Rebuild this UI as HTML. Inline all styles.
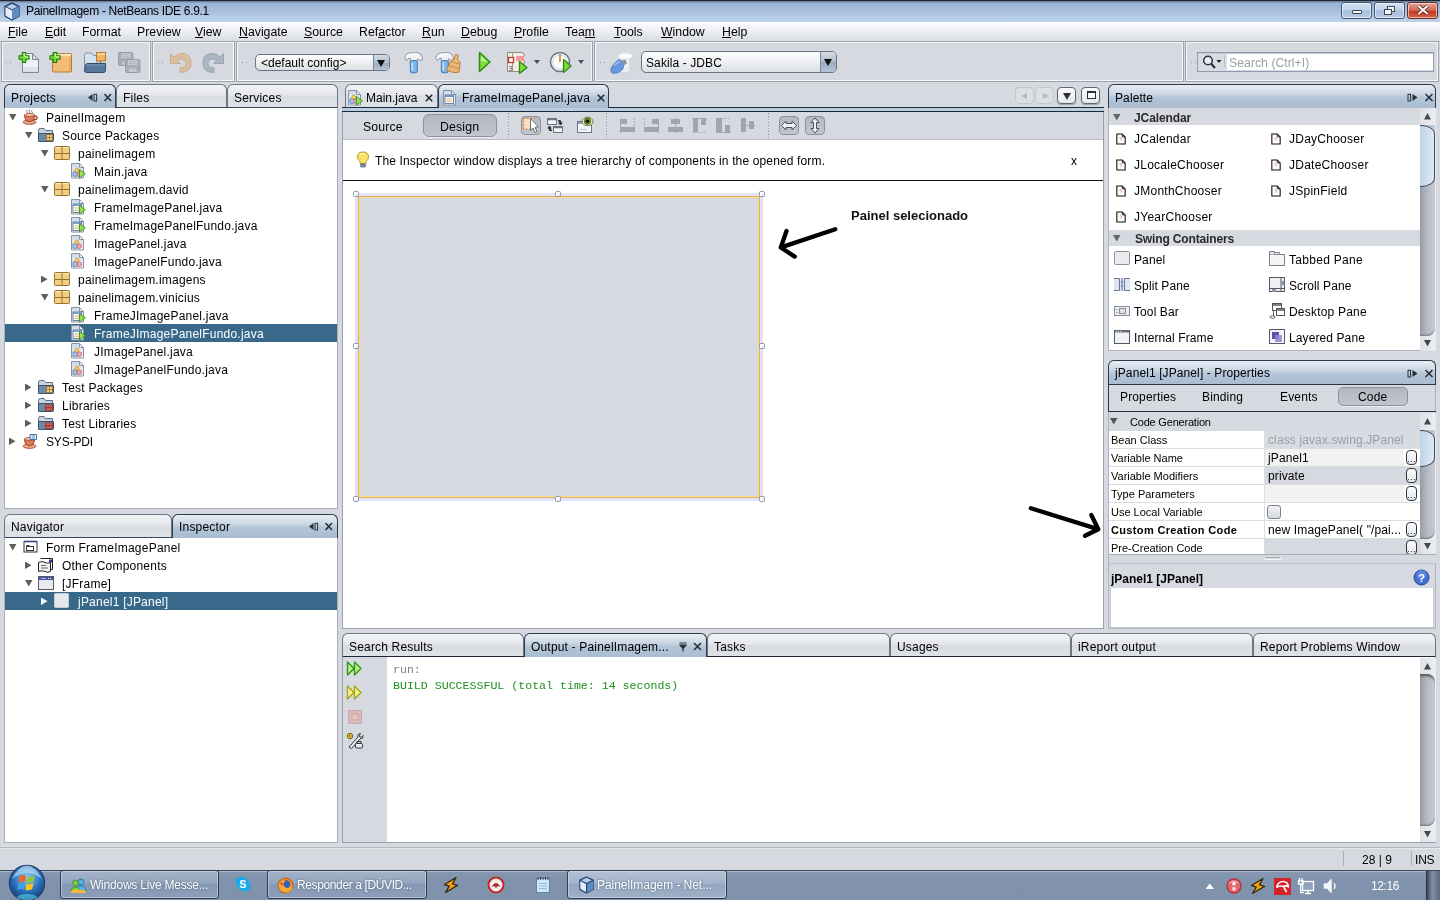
<!DOCTYPE html>
<html lang="en">
<head>
<meta charset="utf-8">
<title>PainelImagem - NetBeans IDE 6.9.1</title>
<style>
*{box-sizing:border-box;margin:0;padding:0}
html,body{width:1440px;height:904px;overflow:hidden;background:#fff}
body{position:relative;-webkit-font-smoothing:antialiased;font-family:"Liberation Sans",sans-serif;font-size:12px;color:#000;line-height:1}
.abs{position:absolute}
#app{position:absolute;left:0;top:0;width:1440px;height:870px;background:#d6d9df}
#app,#tb{will-change:transform}
/* title bar */
#title{position:absolute;left:0;top:0;width:1440px;height:22px;background:linear-gradient(#5d6f88 0,#97b3d5 2px,#a5bedd 9px,#b5cae5 16px,#c1d3ea 22px);border-top:1px solid #1f2733}
#title .t{position:absolute;left:26px;top:4px;font-size:12px;color:#000;letter-spacing:-.32px}
.wb{position:absolute;top:1px;height:17px;border:1px solid #3f5878;border-radius:3px;background:linear-gradient(#d3e1f1,#bfd2e8 48%,#a5bdda 52%,#b7cce5);box-shadow:inset 0 0 0 1px rgba(255,255,255,.55)}
/* menu */
#menu{position:absolute;left:0;top:22px;width:1440px;height:19px;background:linear-gradient(#fdfdfe,#eceef2 50%,#d9dce2)}
#menu span{position:absolute;top:4px;font-size:12.3px;white-space:nowrap}
#menu u{text-decoration:underline;text-underline-offset:1px}
/* toolbar */
.tbg{position:absolute;top:41px;height:41px;border:1px solid #9da1ab;background:#d6d9df;box-shadow:0 0 0 1px #f6f7f8 inset}
.grip{position:absolute;top:62px;width:1px;height:1px;background:#8a909c;box-shadow:4px 0 0 #8a909c}
/* nimbus tabs */
.tab{position:absolute;height:22px;border:1px solid #6e7683;border-bottom:none;border-radius:6px 6px 0 0;background:linear-gradient(#f3f4f6,#e4e6ea 45%,#d9dce1 50%,#dfe2e7);font-size:12px;letter-spacing:.2px;white-space:nowrap;overflow:hidden}
.tab.sel{z-index:2;border-color:#2a394d;background:linear-gradient(#e9eef4,#c9d6e3 40%,#b3c5d8 55%,#a9bcd0)}
.tab b{font-weight:normal;position:absolute;left:6px;top:7px}
.panel{position:absolute;background:#fff;border:1px solid #a9aeb7;border-top-color:#3a4656}
.tree div{position:absolute;left:0;height:18px;white-space:nowrap;font-size:12px;letter-spacing:.22px}
.tree .s{background:#39698a;color:#fff;width:100%}
.tree span{position:absolute;top:4px}
.arr-d{position:absolute;width:7.5px;height:6.5px;background:#5e5e5e;clip-path:polygon(0 0,100% 0,50% 100%)}
.arr-r{position:absolute;width:6.5px;height:7.5px;background:#5e5e5e;clip-path:polygon(0 0,100% 50%,0 100%)}
.combo{border:1px solid #6b7482;border-radius:5px;background:linear-gradient(#fcfcfd,#eef0f3 50%,#dcdfe5);white-space:nowrap;overflow:hidden}
.combo span{position:absolute}
.combo i{position:absolute;right:0;top:0;bottom:0;width:16px;border-left:1px solid #7d8696;background:linear-gradient(#d5dde8,#aebccf 50%,#97a9c1 51%,#b7c4d6)}
.combo i:after{content:"";position:absolute;left:3px;top:50%;margin-top:-3px;border-left:4px solid transparent;border-right:4px solid transparent;border-top:7px solid #111}
.dd{width:0;height:0;border-left:3.5px solid transparent;border-right:3.5px solid transparent;border-top:4px solid #4a4f58}
.nb{position:absolute;top:87px;width:19px;height:17px;border:1px solid #5f6672;border-radius:4px;background:linear-gradient(#fbfbfc,#e6e8ec);box-shadow:0 1px 1px #9ea3ad}
.nb.dis{border-color:#c3c7ce;box-shadow:none;background:#dcdfe4}
.ph{width:311px;height:17px;background:#d6d9df}
.ph b{position:absolute;top:4px;font-size:12px;white-space:nowrap;color:#2a2a2a}
.pt{font-size:12px;letter-spacing:.25px;white-space:nowrap}
.mono{font-family:"Liberation Mono",monospace;font-size:11.6px;white-space:pre}
</style>
</head>
<body>
<svg width="0" height="0" style="position:absolute"><defs><linearGradient id="gdoc" x1="0" y1="0" x2="0" y2="1"><stop offset="0" stop-color="#cbd8e8"/><stop offset=".55" stop-color="#e6ecf3"/><stop offset="1" stop-color="#f4f6f9"/></linearGradient></defs></svg>
<div id="app">

<!-- TITLE BAR -->
<div id="title">
  <svg class="abs" style="left:3px;top:1px" width="18" height="19" viewBox="0 0 18 19"><path d="M9 1 L16 4.5 V14 L9 18 L2 14 V4.5 Z" fill="#b9cfe8" stroke="#26436f" stroke-width="1.4"/><path d="M2 4.5 L9 8 L16 4.5 M9 8 V18" fill="none" stroke="#26436f" stroke-width="1.2"/><path d="M9 8 L16 4.5 V14 L9 18Z" fill="#5f8cc4"/><path d="M2.6 5.2 L9 8.4 V17.2 L2.6 13.6Z" fill="#e6eff9"/></svg>
  <div class="t">PainelImagem - NetBeans IDE 6.9.1</div>
  <div class="wb" style="left:1341px;width:31px"><i class="abs" style="left:10px;top:7px;width:10px;height:4px;border:1px solid #3c4657;background:#f4f6fa;border-radius:1px"></i></div>
  <div class="wb" style="left:1374px;width:31px"><i class="abs" style="left:12px;top:3px;width:8px;height:6px;border:1px solid #3c4657;background:#f4f6fa"></i><i class="abs" style="left:9px;top:6px;width:8px;height:6px;border:1px solid #3c4657;background:#f4f6fa"></i></div>
  <div class="wb" style="left:1407px;width:31px;background:linear-gradient(#e6a597,#d2644f 50%,#c0351c 51%,#d4644a);border-color:#6b2a22"><svg class="abs" style="left:9px;top:2px" width="12" height="10" viewBox="0 0 12 10"><path d="M1.5 1 L10.5 9 M10.5 1 L1.5 9" stroke="#5a1b14" stroke-width="3.6"/><path d="M1.5 1 L10.5 9 M10.5 1 L1.5 9" stroke="#fff" stroke-width="2"/></svg></div>
</div>

<!-- MENU BAR -->
<div id="menu">
  <span style="left:8px"><u>F</u>ile</span>
  <span style="left:45px"><u>E</u>dit</span>
  <span style="left:82px">Format</span>
  <span style="left:137px">Preview</span>
  <span style="left:195px"><u>V</u>iew</span>
  <span style="left:239px"><u>N</u>avigate</span>
  <span style="left:304px"><u>S</u>ource</span>
  <span style="left:359px">Ref<u>a</u>ctor</span>
  <span style="left:422px"><u>R</u>un</span>
  <span style="left:461px"><u>D</u>ebug</span>
  <span style="left:514px"><u>P</u>rofile</span>
  <span style="left:565px">Tea<u>m</u></span>
  <span style="left:614px"><u>T</u>ools</span>
  <span style="left:661px"><u>W</u>indow</span>
  <span style="left:722px"><u>H</u>elp</span>
</div>

<!-- TOOLBAR GROUPS -->
<div class="tbg" style="left:1px;width:150px"></div>
<div class="tbg" style="left:152px;width:83px"></div>
<div class="tbg" style="left:236px;width:357px"></div>
<div class="tbg" style="left:594px;width:590px"></div>
<div class="tbg" style="left:1185px;width:254px"></div>
<i class="grip" style="left:6px"></i><i class="grip" style="left:158px"></i><i class="grip" style="left:242px"></i><i class="grip" style="left:600px"></i><i class="grip" style="left:1191px"></i>
<!-- new file -->
<svg class="abs" style="left:17px;top:49px" width="26" height="26" viewBox="0 0 26 26"><path d="M5.500 4.500 H15.500 L21.500 10.500 V23.500 H5.500Z" fill="#eef2f7" stroke="#7f8896"/><path d="M6 18 H21 V23 H6Z" fill="#dbe2ec"/><path d="M15.500 4.500 V10.500 H21.500Z" fill="#d3dae4" stroke="#7f8896" stroke-linejoin="round"/><path d="M5.300 3.500 h3.400 v3.300 h3.300 v3.400 h-3.300 v3.300 h-3.400 v-3.300 h-3.300 v-3.400 h3.300z" fill="#6fdc2c" stroke="#217d0c" stroke-width="1.100" stroke-linejoin="round"/><path d="M6.300 5 h1.400 v2.800 h2.800 v1.400" fill="none" stroke="#d9fbc0" stroke-width="1"/></svg>
<!-- new project -->
<svg class="abs" style="left:48px;top:49px" width="26" height="26" viewBox="0 0 26 26"><rect x="4.500" y="4.500" width="19" height="18.500" rx="1" fill="#f3bd78" stroke="#b67d31"/><path d="M5 6 H23" stroke="#fbe3bd" stroke-width="2.200"/><path d="M21.800 8 V22" stroke="#e9a95c" stroke-width="1.500"/><path d="M5.300 3.500 h3.400 v3.300 h3.300 v3.400 h-3.300 v3.300 h-3.400 v-3.300 h-3.300 v-3.400 h3.300z" fill="#6fdc2c" stroke="#217d0c" stroke-width="1.100" stroke-linejoin="round"/><path d="M6.300 5 h1.400 v2.800 h2.800 v1.400" fill="none" stroke="#d9fbc0" stroke-width="1"/></svg>
<!-- open project -->
<svg class="abs" style="left:82px;top:49px" width="26" height="26" viewBox="0 0 26 26"><path d="M2.500 6 Q2.500 4 4.500 4 H9.500 L11.500 6.500 H15 V22 H2.500Z" fill="#d3e2ee" stroke="#8193aa"/><rect x="14.500" y="3.500" width="9" height="8.500" fill="#f1b264" stroke="#b57a2c"/><path d="M15 5 H23" stroke="#fbdcad" stroke-width="1.600"/><path d="M18.500 12 V15" stroke="#6a7482" stroke-width="1.400"/><path d="M3.500 16.500 Q3.500 14.500 5.500 14.500 H23.500 V21.500 Q23.500 23.500 21.500 23.500 H4.500 Q2.500 23.500 2.500 21.500Z" fill="#58799c" stroke="#304c6c"/><path d="M4 16 H23" stroke="#7d9bbb" stroke-width="1"/></svg>
<!-- save all (disabled) -->
<svg class="abs" style="left:116px;top:49px" width="26" height="26" viewBox="0 0 26 26"><g fill="#a9adb6" stroke="#979ca6"><rect x="2.500" y="3.500" width="14.500" height="13" rx="1.500"/><rect x="9.500" y="10.500" width="14.500" height="13" rx="1.500"/></g><g fill="#c3c7ce"><rect x="5" y="4" width="9.500" height="5"/><rect x="12" y="11" width="9.500" height="5"/><rect x="13" y="19.500" width="7.500" height="3.500"/><rect x="6" y="12.500" width="3" height="3.500"/></g><path d="M6 5.500 h7.500 M6 7.500 h7.500 M13 12.500 h7.500 M13 14.500 h7.500" stroke="#b4b8c0" stroke-width=".8"/></svg>
<!-- undo (disabled) -->
<svg class="abs" style="left:167px;top:49px" width="26" height="26" viewBox="0 0 26 26"><path d="M3.500 4.500 V14.500 H13.500 L10.500 11.500 Q13 9.500 15.500 10 Q19 11 19 14.500 Q19 18.500 13 19 V23.500 Q24 23.500 24 14 Q24 4.500 15 4.500 Q10.500 4.500 7 8 Z" fill="#d8bf9f" stroke="#c7ad8c" stroke-linejoin="round"/></svg>
<!-- redo (disabled) -->
<svg class="abs" style="left:201px;top:49px" width="26" height="26" viewBox="0 0 26 26"><path transform="translate(26,0) scale(-1,1)" d="M3.500 4.500 V14.500 H13.500 L10.500 11.500 Q13 9.500 15.500 10 Q19 11 19 14.500 Q19 18.500 13 19 V23.500 Q24 23.500 24 14 Q24 4.500 15 4.500 Q10.500 4.500 7 8 Z" fill="#aab6c2" stroke="#98a5b2" stroke-linejoin="round"/></svg>
<!-- config combo -->
<div class="abs combo" style="left:255px;top:54px;width:135px;height:17px"><span style="left:5px;top:2px;font-size:12px">&lt;default config&gt;</span><i></i></div>
<!-- build hammer -->
<svg class="abs" style="left:401px;top:49px" width="26" height="26" viewBox="0 0 26 26"><path d="M3.800 9 Q4.500 4.200 10 3.800 H17 Q20.500 4.300 21.200 8.500 L21.200 11.200 L18.800 11.600 Q18 9.800 16.300 9.800 V12.500 H9.300 V9.300 Q6.800 8.800 5.300 11.500Z" fill="#f1f3f6" stroke="#8a93a1" stroke-linejoin="round"/><path d="M6 7.500 Q7.500 5.300 10.500 5.200 H16.500" fill="none" stroke="#fff" stroke-width="1.200"/><rect x="9.300" y="11.500" width="7" height="12.300" rx="2" fill="#7fb6ea" stroke="#3f74ad"/><path d="M11.300 13.500 V21.500" stroke="#c4e0f8" stroke-width="1.600"/></svg>
<!-- clean & build -->
<svg class="abs" style="left:433px;top:49px" width="30" height="26" viewBox="0 0 30 26"><g transform="translate(-1,0)"><path d="M3.800 9 Q4.500 4.200 10 3.800 H17 Q20.500 4.300 21.200 8.500 L21.200 11.200 L18.800 11.600 Q18 9.800 16.300 9.800 V12.500 H9.300 V9.300 Q6.800 8.800 5.300 11.500Z" fill="#f1f3f6" stroke="#8a93a1" stroke-linejoin="round"/><path d="M6 7.500 Q7.500 5.300 10.500 5.200 H16.500" fill="none" stroke="#fff" stroke-width="1.200"/><rect x="9.300" y="11.500" width="7" height="12.300" rx="2" fill="#7fb6ea" stroke="#3f74ad"/><path d="M11.300 13.500 V21.500" stroke="#c4e0f8" stroke-width="1.600"/></g><path d="M22.500 5.500 L25.300 6.500 L24.300 11 L27.300 13.200 L26 23.200 Q20 25 13.500 21 L18.500 11 L21.300 10.300Z" fill="#edbb7a" stroke="#b98038" stroke-linejoin="round"/><path d="M18.500 12.500 L26.500 15 M16.500 17 L26 19.500" stroke="#c48a42" stroke-width="1"/><path d="M17 21.500 L20 15 M20.500 23 L23 16.500 M23.500 23.300 L25 18" stroke="#d9a35d" stroke-width=".8"/></svg>
<!-- run -->
<svg class="abs" style="left:474px;top:49px" width="22" height="26" viewBox="0 0 22 26"><path d="M5.500 3.500 L16 13 L5.500 22.500Z" fill="#7ddc3e" stroke="#2c8c12" stroke-width="1.500" stroke-linejoin="round"/><path d="M7 7 L13.500 13 L7 12Z" fill="#c6f3a4"/></svg>
<!-- debug -->
<svg class="abs" style="left:504px;top:49px" width="28" height="26" viewBox="0 0 28 26"><path d="M3.500 3.500 H19 L20.500 6 L19 9 L20.500 13 L19 17 V22.500 H3.500Z" fill="#f1ede0" stroke="#8d8c86"/><rect x="12" y="7" width="8" height="5" fill="#f29a9a"/><path d="M8.500 3 V23" stroke="#9a9a94"/><rect x="4.500" y="8.500" width="5" height="5" fill="#fff" stroke="#c0392b" stroke-width="1.300"/><text x="4.500" y="21.500" font-size="7.500" font-family="Liberation Sans,sans-serif" fill="#555">3</text><path d="M15.500 12.500 L23 18.500 L15.500 24.500Z" fill="#7ddc3e" stroke="#2c8c12" stroke-width="1.300" stroke-linejoin="round"/></svg>
<i class="abs dd" style="left:534px;top:60px"></i>
<!-- profile -->
<svg class="abs" style="left:548px;top:49px" width="28" height="26" viewBox="0 0 28 26"><circle cx="12" cy="13" r="9.500" fill="#f4f6f9" stroke="#6b7585" stroke-width="1.600"/><circle cx="12" cy="13" r="7" fill="#fff" stroke="#c9ced6" stroke-width=".8"/><path d="M12 5 V13" stroke="#e07b24" stroke-width="1.600"/><path d="M15.500 10.500 L23 17 L15.500 23.500Z" fill="#7ddc3e" stroke="#2c8c12" stroke-width="1.300" stroke-linejoin="round"/></svg>
<i class="abs dd" style="left:578px;top:60px"></i>
<!-- db connect -->
<svg class="abs" style="left:608px;top:48px" width="28" height="28" viewBox="0 0 28 28"><path d="M10 8 Q10 4.500 17.500 4.500 Q25 4.500 25 8 V21 Q25 24.500 17.500 24.500 Q10 24.500 10 21Z" fill="#eceef1" stroke="#d2d5db"/><path d="M21 6 V24 Q25 23.500 25 21 V8 Q24.500 6.500 21 6Z" fill="#d5d8de"/><ellipse cx="17.500" cy="8" rx="7.500" ry="3.200" fill="#fbfbfc" stroke="#d9dce1"/><path d="M11 11.500 L16.500 14 L15 21 Q11 25.500 5.500 25.500 Q2 24.500 3 20.500 Q5 15.500 11 11.500Z" fill="#6697db" stroke="#4f7fc4" stroke-width=".8"/><path d="M6 17.500 Q9 14.500 12 13.500" fill="none" stroke="#9cbdeb" stroke-width="1.500"/><path d="M13.500 13 L17.500 11.500 L19 15.500 L16 17Z" fill="#8b919c"/></svg>
<!-- db combo -->
<div class="abs combo" style="left:641px;top:51px;width:196px;height:22px"><span style="left:4px;top:5px;font-size:12px;letter-spacing:.1px">Sakila - JDBC</span><i></i></div>
<!-- search -->
<div class="abs" style="left:1197px;top:52px;width:237px;height:20px;border:1px solid #8f9bad;background:#d9dce2;box-shadow:inset 0 1px 0 #c3c7ce"><div class="abs" style="left:29px;top:1px;width:206px;height:16px;background:#fff"></div><svg class="abs" style="left:4px;top:1px" width="24" height="16" viewBox="0 0 24 16"><circle cx="6" cy="6.500" r="4.300" fill="#e4eef8" stroke="#2a2f38" stroke-width="1.500"/><path d="M9.200 9.800 L13 14" stroke="#2a2f38" stroke-width="2.200"/><path d="M14.500 6 h5 l-2.500 3z" fill="#1c1f25"/><path d="M22.500 2 V13" stroke="#b9bdc5"/></svg><span class="abs" style="left:31px;top:4px;font-size:12.300px;color:#9a9fa8;white-space:nowrap">Search (Ctrl+I)</span></div>


<!-- LEFT: Projects / Files / Services -->
<div class="tab sel" style="left:4px;top:84px;width:112px;height:24px"><b>Projects</b>
 <svg class="abs" style="left:82px;top:8px" width="26" height="10" viewBox="0 0 26 10"><path d="M5.500 1 V8 L1 4.500Z" fill="#2b3038"/><rect x="7" y="1.300" width="2.600" height="6.700" fill="none" stroke="#2b3038" stroke-width="1"/><path d="M17.500 1 L24 8 M24 1 L17.500 8" stroke="#2b3038" stroke-width="1.600"/></svg></div>
<div class="tab" style="left:116px;top:84px;width:111px;height:23px"><b>Files</b></div>
<div class="tab" style="left:227px;top:84px;width:111px;height:23px"><b>Services</b></div>
<div class="panel tree" style="left:4px;top:107px;width:334px;height:402px">
<div style="top:0px"><i class="arr-d" style="left:4px;top:6px"></i><svg class="abs" style="left:17px;top:1px" width="16" height="16" viewBox="0 0 16 16"><path d="M5 1 Q4 2.500 5.500 4 M7.500 .5 Q6.500 2 8 4 M10 1 Q9 2.500 10.500 4" fill="none" stroke="#6b6f78" stroke-width=".8"/><ellipse cx="7.500" cy="13.200" rx="6.500" ry="2.200" fill="#e6a083" stroke="#9c4a30" stroke-width=".8"/><path d="M2.500 6 H12.500 Q12.500 12.500 7.500 12.500 Q2.500 12.500 2.500 6Z" fill="#dd7a5a" stroke="#8e3c25" stroke-width=".9"/><path d="M12.300 7 Q15.500 7 15 9 Q14.500 11 11.500 10.500" fill="none" stroke="#9a3c20" stroke-width="1.300"/><ellipse cx="7.500" cy="6" rx="5" ry="1.500" fill="#f7c9a8" stroke="#9a3c20" stroke-width=".8"/></svg><span style="left:41px">PainelImagem</span></div>
<div style="top:18px"><i class="arr-d" style="left:20px;top:6px"></i><svg class="abs" style="left:33px;top:1px" width="16" height="16" viewBox="0 0 16 16"><path d="M.5 3.500 Q.5 1.500 2.500 1.500 H6 L7.500 3.500 H14.500 V14.500 H.500Z" fill="#c9d3e0" stroke="#5b6a80"/><path d="M.5 6.500 H15.500 V13.500 Q15.500 14.500 14.500 14.500 H1.500 Q.5 14.500 .5 13.500Z" fill="#6d88a8" stroke="#3d546f"/><rect x="8.500" y="7.500" width="6" height="6" fill="#f3d27e" stroke="#9c7226" stroke-width=".9"/><path d="M11.500 8 V13 M9 10.500 H14" stroke="#9c7226" stroke-width=".8"/></svg><span style="left:57px">Source Packages</span></div>
<div style="top:36px"><i class="arr-d" style="left:36px;top:6px"></i><svg class="abs" style="left:49px;top:1px" width="16" height="16" viewBox="0 0 16 16"><rect x=".5" y="1.500" width="15" height="13" rx="1" fill="#f0cf86" stroke="#9c7226"/><path d="M1.500 2.500 H14.500" stroke="#fbeabf"/><path d="M8 2 V14 M1 8.500 H15" stroke="#9c7226"/></svg><span style="left:73px">painelimagem</span></div>
<div style="top:54px"><svg class="abs" style="left:65px;top:1px" width="16" height="16" viewBox="0 0 16 16"><path d="M1.500 .5 H9.500 L13.500 4.500 V15 H1.500Z" fill="url(#gdoc)" stroke="#8a93a3"/><path d="M9.500 .5 V4.500 H13.500Z" fill="#f4f6f9" stroke="#8a93a3" stroke-linejoin="round"/><rect x="3" y="9" width="4.200" height="4.200" fill="#a9cbee" stroke="#4b78ad" stroke-width=".8"/><circle cx="9.300" cy="11.200" r="2.300" fill="#f4aab6" stroke="#c25a6e" stroke-width=".8"/><path d="M6.800 4.800 L9.200 7.200 L6.800 9.600 L4.400 7.200Z" fill="#f8cf62" stroke="#b9831d" stroke-width=".8"/><path d="M9.500 6.500 L15.300 10.800 L9.500 15Z" fill="#98df55" stroke="#3a8f1c" stroke-width=".9" stroke-linejoin="round"/></svg><span style="left:89px">Main.java</span></div>
<div style="top:72px"><i class="arr-d" style="left:36px;top:6px"></i><svg class="abs" style="left:49px;top:1px" width="16" height="16" viewBox="0 0 16 16"><rect x=".5" y="1.500" width="15" height="13" rx="1" fill="#f0cf86" stroke="#9c7226"/><path d="M1.500 2.500 H14.500" stroke="#fbeabf"/><path d="M8 2 V14 M1 8.500 H15" stroke="#9c7226"/></svg><span style="left:73px">painelimagem.david</span></div>
<div style="top:90px"><svg class="abs" style="left:65px;top:1px" width="16" height="16" viewBox="0 0 16 16"><path d="M1.500 .5 H9.500 L13.500 4.500 V15 H1.500Z" fill="url(#gdoc)" stroke="#8a93a3"/><path d="M9.500 .5 V4.500 H13.500Z" fill="#f4f6f9" stroke="#8a93a3" stroke-linejoin="round"/><rect x="3" y="5" width="8.500" height="8.500" fill="#fff" stroke="#5f7391" stroke-width=".9"/><path d="M3 6 H11.500" stroke="#6f98cf" stroke-width="1.800"/><path d="M4.500 9 H10 M4.500 11.300 H10" stroke="#d2b366" stroke-width="1.100"/><path d="M9.500 6.500 L15.300 10.800 L9.500 15Z" fill="#98df55" stroke="#3a8f1c" stroke-width=".9" stroke-linejoin="round"/></svg><span style="left:89px">FrameImagePanel.java</span></div>
<div style="top:108px"><svg class="abs" style="left:65px;top:1px" width="16" height="16" viewBox="0 0 16 16"><path d="M1.500 .5 H9.500 L13.500 4.500 V15 H1.500Z" fill="url(#gdoc)" stroke="#8a93a3"/><path d="M9.500 .5 V4.500 H13.500Z" fill="#f4f6f9" stroke="#8a93a3" stroke-linejoin="round"/><rect x="3" y="5" width="8.500" height="8.500" fill="#fff" stroke="#5f7391" stroke-width=".9"/><path d="M3 6 H11.500" stroke="#6f98cf" stroke-width="1.800"/><path d="M4.500 9 H10 M4.500 11.300 H10" stroke="#d2b366" stroke-width="1.100"/><path d="M9.500 6.500 L15.300 10.800 L9.500 15Z" fill="#98df55" stroke="#3a8f1c" stroke-width=".9" stroke-linejoin="round"/></svg><span style="left:89px">FrameImagePanelFundo.java</span></div>
<div style="top:126px"><svg class="abs" style="left:65px;top:1px" width="16" height="16" viewBox="0 0 16 16"><path d="M1.500 .5 H9.500 L13.500 4.500 V15 H1.500Z" fill="url(#gdoc)" stroke="#8a93a3"/><path d="M9.500 .5 V4.500 H13.500Z" fill="#f4f6f9" stroke="#8a93a3" stroke-linejoin="round"/><rect x="3" y="9" width="4.200" height="4.200" fill="#a9cbee" stroke="#4b78ad" stroke-width=".8"/><circle cx="9.300" cy="11.200" r="2.300" fill="#f4aab6" stroke="#c25a6e" stroke-width=".8"/><path d="M6.800 4.800 L9.200 7.200 L6.800 9.600 L4.400 7.200Z" fill="#f8cf62" stroke="#b9831d" stroke-width=".8"/></svg><span style="left:89px">ImagePanel.java</span></div>
<div style="top:144px"><svg class="abs" style="left:65px;top:1px" width="16" height="16" viewBox="0 0 16 16"><path d="M1.500 .5 H9.500 L13.500 4.500 V15 H1.500Z" fill="url(#gdoc)" stroke="#8a93a3"/><path d="M9.500 .5 V4.500 H13.500Z" fill="#f4f6f9" stroke="#8a93a3" stroke-linejoin="round"/><rect x="3" y="9" width="4.200" height="4.200" fill="#a9cbee" stroke="#4b78ad" stroke-width=".8"/><circle cx="9.300" cy="11.200" r="2.300" fill="#f4aab6" stroke="#c25a6e" stroke-width=".8"/><path d="M6.800 4.800 L9.200 7.200 L6.800 9.600 L4.400 7.200Z" fill="#f8cf62" stroke="#b9831d" stroke-width=".8"/></svg><span style="left:89px">ImagePanelFundo.java</span></div>
<div style="top:162px"><i class="arr-r" style="left:36px;top:5.5px"></i><svg class="abs" style="left:49px;top:1px" width="16" height="16" viewBox="0 0 16 16"><rect x=".5" y="1.500" width="15" height="13" rx="1" fill="#f0cf86" stroke="#9c7226"/><path d="M1.500 2.500 H14.500" stroke="#fbeabf"/><path d="M8 2 V14 M1 8.500 H15" stroke="#9c7226"/></svg><span style="left:73px">painelimagem.imagens</span></div>
<div style="top:180px"><i class="arr-d" style="left:36px;top:6px"></i><svg class="abs" style="left:49px;top:1px" width="16" height="16" viewBox="0 0 16 16"><rect x=".5" y="1.500" width="15" height="13" rx="1" fill="#f0cf86" stroke="#9c7226"/><path d="M1.500 2.500 H14.500" stroke="#fbeabf"/><path d="M8 2 V14 M1 8.500 H15" stroke="#9c7226"/></svg><span style="left:73px">painelimagem.vinicius</span></div>
<div style="top:198px"><svg class="abs" style="left:65px;top:1px" width="16" height="16" viewBox="0 0 16 16"><path d="M1.500 .5 H9.500 L13.500 4.500 V15 H1.500Z" fill="url(#gdoc)" stroke="#8a93a3"/><path d="M9.500 .5 V4.500 H13.500Z" fill="#f4f6f9" stroke="#8a93a3" stroke-linejoin="round"/><rect x="3" y="5" width="8.500" height="8.500" fill="#fff" stroke="#5f7391" stroke-width=".9"/><path d="M3 6 H11.500" stroke="#6f98cf" stroke-width="1.800"/><path d="M4.500 9 H10 M4.500 11.300 H10" stroke="#d2b366" stroke-width="1.100"/><path d="M9.500 6.500 L15.300 10.800 L9.500 15Z" fill="#98df55" stroke="#3a8f1c" stroke-width=".9" stroke-linejoin="round"/></svg><span style="left:89px">FrameJImagePanel.java</span></div>
<div class=s style="top:216px"><svg class="abs" style="left:65px;top:1px" width="16" height="16" viewBox="0 0 16 16"><path d="M1.500 .5 H9.500 L13.500 4.500 V15 H1.500Z" fill="url(#gdoc)" stroke="#8a93a3"/><path d="M9.500 .5 V4.500 H13.500Z" fill="#f4f6f9" stroke="#8a93a3" stroke-linejoin="round"/><rect x="3" y="5" width="8.500" height="8.500" fill="#fff" stroke="#5f7391" stroke-width=".9"/><path d="M3 6 H11.500" stroke="#6f98cf" stroke-width="1.800"/><path d="M4.500 9 H10 M4.500 11.300 H10" stroke="#d2b366" stroke-width="1.100"/><path d="M9.500 6.500 L15.300 10.800 L9.500 15Z" fill="#98df55" stroke="#3a8f1c" stroke-width=".9" stroke-linejoin="round"/></svg><span style="left:89px">FrameJImagePanelFundo.java</span></div>
<div style="top:234px"><svg class="abs" style="left:65px;top:1px" width="16" height="16" viewBox="0 0 16 16"><path d="M1.500 .5 H9.500 L13.500 4.500 V15 H1.500Z" fill="url(#gdoc)" stroke="#8a93a3"/><path d="M9.500 .5 V4.500 H13.500Z" fill="#f4f6f9" stroke="#8a93a3" stroke-linejoin="round"/><rect x="3" y="9" width="4.200" height="4.200" fill="#a9cbee" stroke="#4b78ad" stroke-width=".8"/><circle cx="9.300" cy="11.200" r="2.300" fill="#f4aab6" stroke="#c25a6e" stroke-width=".8"/><path d="M6.800 4.800 L9.200 7.200 L6.800 9.600 L4.400 7.200Z" fill="#f8cf62" stroke="#b9831d" stroke-width=".8"/></svg><span style="left:89px">JImagePanel.java</span></div>
<div style="top:252px"><svg class="abs" style="left:65px;top:1px" width="16" height="16" viewBox="0 0 16 16"><path d="M1.500 .5 H9.500 L13.500 4.500 V15 H1.500Z" fill="url(#gdoc)" stroke="#8a93a3"/><path d="M9.500 .5 V4.500 H13.500Z" fill="#f4f6f9" stroke="#8a93a3" stroke-linejoin="round"/><rect x="3" y="9" width="4.200" height="4.200" fill="#a9cbee" stroke="#4b78ad" stroke-width=".8"/><circle cx="9.300" cy="11.200" r="2.300" fill="#f4aab6" stroke="#c25a6e" stroke-width=".8"/><path d="M6.800 4.800 L9.200 7.200 L6.800 9.600 L4.400 7.200Z" fill="#f8cf62" stroke="#b9831d" stroke-width=".8"/></svg><span style="left:89px">JImagePanelFundo.java</span></div>
<div style="top:270px"><i class="arr-r" style="left:20px;top:5.5px"></i><svg class="abs" style="left:33px;top:1px" width="16" height="16" viewBox="0 0 16 16"><path d="M.5 3.500 Q.5 1.500 2.500 1.500 H6 L7.500 3.500 H14.500 V14.500 H.500Z" fill="#c9d3e0" stroke="#5b6a80"/><path d="M.5 6.500 H15.500 V13.500 Q15.500 14.500 14.500 14.500 H1.500 Q.5 14.500 .5 13.500Z" fill="#6d88a8" stroke="#3d546f"/><rect x="8.500" y="7.500" width="6" height="6" fill="#f3d27e" stroke="#9c7226" stroke-width=".9"/><path d="M11.500 8 V13 M9 10.500 H14" stroke="#9c7226" stroke-width=".8"/></svg><span style="left:57px">Test Packages</span></div>
<div style="top:288px"><i class="arr-r" style="left:20px;top:5.5px"></i><svg class="abs" style="left:33px;top:1px" width="16" height="16" viewBox="0 0 16 16"><path d="M.5 3.500 Q.5 1.500 2.500 1.500 H6 L7.500 3.500 H14.500 V14.500 H.500Z" fill="#c9d3e0" stroke="#5b6a80"/><path d="M.5 6.500 H15.500 V13.500 Q15.500 14.500 14.500 14.500 H1.500 Q.5 14.500 .5 13.500Z" fill="#6d88a8" stroke="#3d546f"/><rect x="7.500" y="8" width="7" height="2.300" fill="#e8604f" stroke="#8d2a20" stroke-width=".7"/><rect x="7.500" y="11" width="7" height="2.300" fill="#e8604f" stroke="#8d2a20" stroke-width=".7"/></svg><span style="left:57px">Libraries</span></div>
<div style="top:306px"><i class="arr-r" style="left:20px;top:5.5px"></i><svg class="abs" style="left:33px;top:1px" width="16" height="16" viewBox="0 0 16 16"><path d="M.5 3.500 Q.5 1.500 2.500 1.500 H6 L7.500 3.500 H14.500 V14.500 H.500Z" fill="#c9d3e0" stroke="#5b6a80"/><path d="M.5 6.500 H15.500 V13.500 Q15.500 14.500 14.500 14.500 H1.500 Q.5 14.500 .5 13.500Z" fill="#6d88a8" stroke="#3d546f"/><rect x="7.500" y="8" width="7" height="2.300" fill="#e8604f" stroke="#8d2a20" stroke-width=".7"/><rect x="7.500" y="11" width="7" height="2.300" fill="#e8604f" stroke="#8d2a20" stroke-width=".7"/></svg><span style="left:57px">Test Libraries</span></div>
<div style="top:324px"><i class="arr-r" style="left:4px;top:5.5px"></i><svg class="abs" style="left:17px;top:1px" width="16" height="16" viewBox="0 0 16 16"><ellipse cx="7.500" cy="13.200" rx="6.500" ry="2.200" fill="#e6a083" stroke="#9c4a30" stroke-width=".8"/><path d="M2.500 6 H12.500 Q12.500 12.500 7.500 12.500 Q2.500 12.500 2.500 6Z" fill="#dd7a5a" stroke="#8e3c25" stroke-width=".9"/><ellipse cx="7.500" cy="6" rx="5" ry="1.500" fill="#f7c9a8" stroke="#9a3c20" stroke-width=".8"/><path d="M8 1.500 h6.500 v5 h-6.500z" fill="#fff" stroke="#3f6fae" stroke-width="1"/><path d="M9.500 3 h3.500 M9.500 5 h3.500" stroke="#3f6fae" stroke-width=".9"/></svg><span style="left:41px;letter-spacing:-.15px">SYS-PDI</span></div>
</div>
<!-- LEFT: Navigator / Inspector -->
<div class="tab" style="left:4px;top:514px;width:168px;height:23px"><b style="top:6px">Navigator</b></div>
<div class="tab sel" style="left:172px;top:514px;width:166px;height:24px"><b style="top:6px">Inspector</b>
 <svg class="abs" style="left:135px;top:7px" width="26" height="10" viewBox="0 0 26 10"><path d="M5.500 1 V8 L1 4.500Z" fill="#2b3038"/><rect x="7" y="1.300" width="2.600" height="6.700" fill="none" stroke="#2b3038" stroke-width="1"/><path d="M17.500 1 L24 8 M24 1 L17.500 8" stroke="#2b3038" stroke-width="1.600"/></svg></div>
<div class="panel tree" style="left:4px;top:537px;width:334px;height:306px">
<div style="top:0px"><i class="arr-d" style="left:4px;top:6px"></i><svg class="abs" style="left:17px;top:1px" width="16" height="16" viewBox="0 0 16 16"><rect x="2" y="2.500" width="13" height="10.500" fill="#fff" stroke="#333" stroke-width="1"/><path d="M2 2.500 H15" stroke="#3b3f8f" stroke-width="1.600"/><rect x="4.500" y="7.500" width="7" height="4" fill="none" stroke="#333" stroke-width="1"/><path d="M4.500 7.500 h3 v-1.500 h-3z" fill="#333"/></svg><span style="left:41px">Form FrameImagePanel</span></div>
<div style="top:18px"><i class="arr-r" style="left:20px;top:5.5px"></i><svg class="abs" style="left:33px;top:1px" width="16" height="16" viewBox="0 0 16 16"><path d="M2.500 1.500 H14.500 V12.500 H12" fill="#fff" stroke="#222" stroke-width="1"/><path d="M11 2.500 h3 v3 h-3z" fill="#2b3a9c"/><path d="M.5 5.500 Q4 3.500 7 5.500 Q9.500 7 12.500 5.500 V14.500 Q9.500 16 7 14.500 Q4 13 .5 14.500Z" fill="#f2f3f5" stroke="#222" stroke-width="1"/><path d="M3 8.500 h5 M3 11 h7" stroke="#555" stroke-width=".9"/></svg><span style="left:57px">Other Components</span></div>
<div style="top:36px"><i class="arr-d" style="left:20px;top:6px"></i><svg class="abs" style="left:33px;top:1px" width="16" height="16" viewBox="0 0 16 16"><rect x=".5" y="1.500" width="15" height="13" fill="#e9ebee" stroke="#555b66"/><rect x="1" y="2" width="14" height="3" fill="#4b4fa3"/><path d="M10 3.500 h1 M12 3.500 h1" stroke="#fff"/><path d="M3 3.500 h5" stroke="#c8caf0" stroke-width=".8"/></svg><span style="left:57px">[JFrame]</span></div>
<div class=s style="top:54px"><i class="arr-r" style="left:36px;top:5.5px;background:#fff"></i><svg class="abs" style="left:49px;top:1px" width="16" height="16" viewBox="0 0 16 16"><rect x=".5" y=".5" width="14" height="14" rx="1" fill="#e6e8ec" stroke="#c9ccd2"/></svg><span style="left:73px">jPanel1 [JPanel]</span></div>
</div>
<!-- EDITOR TABS -->
<div class="abs" style="left:342px;top:107px;width:762px;height:5px;background:#b9cee3;border-top:1px solid #1d2836;border-bottom:1px solid #1d2836"></div>
<div class="tab" style="left:345px;top:84px;width:93px;height:23px"><svg class="abs" style="left:1px;top:5px" width="16" height="16" viewBox="0 0 16 16"><path d="M1.500 .5 H9.500 L13.500 4.500 V15 H1.500Z" fill="url(#gdoc)" stroke="#8a93a3"/><path d="M9.500 .5 V4.500 H13.500Z" fill="#f4f6f9" stroke="#8a93a3" stroke-linejoin="round"/><rect x="3" y="9" width="4.200" height="4.200" fill="#a9cbee" stroke="#4b78ad" stroke-width=".8"/><circle cx="9.300" cy="11.200" r="2.300" fill="#f4aab6" stroke="#c25a6e" stroke-width=".8"/><path d="M6.800 4.800 L9.200 7.200 L6.800 9.600 L4.400 7.200Z" fill="#f8cf62" stroke="#b9831d" stroke-width=".8"/><path d="M9.500 6.500 L15.300 10.800 L9.500 15Z" fill="#98df55" stroke="#3a8f1c" stroke-width=".9" stroke-linejoin="round"/></svg><b style="left:20px;letter-spacing:0">Main.java</b><svg class="abs" style="left:79px;top:9px" width="8" height="8" viewBox="0 0 8 8"><path d="M.8 .8 L7.200 7.200 M7.200 .8 L.8 7.200" stroke="#22262d" stroke-width="1.500"/></svg></div>
<div class="tab sel" style="left:438px;top:84px;width:171px;height:24px"><svg class="abs" style="left:3px;top:5px" width="16" height="16" viewBox="0 0 16 16"><path d="M1.500 .5 H9.500 L13.500 4.500 V15 H1.500Z" fill="url(#gdoc)" stroke="#8a93a3"/><path d="M9.500 .5 V4.500 H13.500Z" fill="#f4f6f9" stroke="#8a93a3" stroke-linejoin="round"/><rect x="3" y="5" width="8.500" height="8.500" fill="#fff" stroke="#5f7391" stroke-width=".9"/><path d="M3 6 H11.500" stroke="#6f98cf" stroke-width="1.800"/><path d="M4.500 9 H10 M4.500 11.300 H10" stroke="#d2b366" stroke-width="1.100"/></svg><b style="left:23px;letter-spacing:.2px">FrameImagePanel.java</b><svg class="abs" style="left:158px;top:9px" width="8" height="8" viewBox="0 0 8 8"><path d="M.8 .8 L7.200 7.200 M7.200 .8 L.8 7.200" stroke="#22262d" stroke-width="1.500"/></svg></div>
<div class="nb dis" style="left:1015px"><i class="abs" style="left:5px;top:5px;border-top:3.500px solid transparent;border-bottom:3.500px solid transparent;border-right:6px solid #b4b8c0"></i></div>
<div class="nb dis" style="left:1035px"><i class="abs" style="left:7px;top:5px;border-top:3.500px solid transparent;border-bottom:3.500px solid transparent;border-left:6px solid #b4b8c0"></i></div>
<div class="nb" style="left:1057px"><i class="abs" style="left:5px;top:5px;border-left:4px solid transparent;border-right:4px solid transparent;border-top:7px solid #2b2f36"></i></div>
<div class="nb" style="left:1081px"><i class="abs" style="left:5px;top:3px;width:9px;height:8px;border:1.500px solid #2b2f36;border-top-width:2px;background:#fff"></i></div>
<div class="abs" style="left:342px;top:112px;width:762px;height:517px;background:#fff;border:1px solid #9aa0ab;border-top:none"></div>
<div class="abs" style="left:343px;top:112px;width:760px;height:28px;background:#d6d9df;border-bottom:1px solid #b9bdc5"></div>
<span class="abs" style="left:363px;top:121px;font-size:12.300px;letter-spacing:.15px">Source</span>
<div class="abs" style="left:423px;top:114px;width:74px;height:23px;border:1px solid #8c919b;border-radius:6px;background:linear-gradient(#b4b8c1,#c1c5cd);box-shadow:0 1px 0 #eceef1"></div>
<span class="abs" style="left:440px;top:121px;font-size:12.300px;letter-spacing:.15px">Design</span>
<i class="abs" style="left:508px;top:113px;width:1px;height:26px;background:repeating-linear-gradient(#8e949f 0 1px,transparent 1px 3px)"></i>
<i class="abs" style="left:606px;top:113px;width:1px;height:26px;background:repeating-linear-gradient(#8e949f 0 1px,transparent 1px 3px)"></i>
<i class="abs" style="left:768px;top:113px;width:1px;height:26px;background:repeating-linear-gradient(#8e949f 0 1px,transparent 1px 3px)"></i>
<!--FORM-TOOLBAR-ICONS-->
<svg class="abs" style="left:356px;top:151px" width="14" height="18" viewBox="0 0 14 18"><path d="M7 1 Q12.500 1 12.500 6 Q12.500 8.500 10 10.500 V12.500 H4 V10.500 Q1.500 8.500 1.500 6 Q1.500 1 7 1Z" fill="#f9e36b" stroke="#b39a23"/><path d="M4.500 3.500 Q6 2.300 8 2.800" fill="none" stroke="#fff8c7" stroke-width="1.300"/><rect x="4.500" y="13" width="5" height="3" rx="1" fill="#7d8fa9" stroke="#55657d" stroke-width=".8"/></svg>
<span class="abs" style="left:375px;top:155px;font-size:12px;letter-spacing:.14px;white-space:nowrap">The Inspector window displays a tree hierarchy of components in the opened form.</span>
<span class="abs" style="left:1071px;top:155px;font-size:12px">x</span>
<div class="abs" style="left:343px;top:180px;width:760px;height:1px;background:#111"></div>
<div class="abs" style="left:355px;top:193px;width:408px;height:308px;background:#e2e3fa"></div>
<div class="abs" style="left:358px;top:196px;width:402px;height:302px;background:#d6d9df;border:1px solid #deb25c;box-shadow:inset 0 0 0 1px #f8da92"></div>
<i class="abs" style="left:353px;top:191px;width:6px;height:6px;background:linear-gradient(135deg,#fff 40%,#e1e3f3);border:1px solid #8e97ae;border-radius:1.5px"></i>
<i class="abs" style="left:555px;top:191px;width:6px;height:6px;background:linear-gradient(135deg,#fff 40%,#e1e3f3);border:1px solid #8e97ae;border-radius:1.5px"></i>
<i class="abs" style="left:759px;top:191px;width:6px;height:6px;background:linear-gradient(135deg,#fff 40%,#e1e3f3);border:1px solid #8e97ae;border-radius:1.5px"></i>
<i class="abs" style="left:353px;top:343px;width:6px;height:6px;background:linear-gradient(135deg,#fff 40%,#e1e3f3);border:1px solid #8e97ae;border-radius:1.5px"></i>
<i class="abs" style="left:759px;top:343px;width:6px;height:6px;background:linear-gradient(135deg,#fff 40%,#e1e3f3);border:1px solid #8e97ae;border-radius:1.5px"></i>
<i class="abs" style="left:353px;top:496px;width:6px;height:6px;background:linear-gradient(135deg,#fff 40%,#e1e3f3);border:1px solid #8e97ae;border-radius:1.5px"></i>
<i class="abs" style="left:555px;top:496px;width:6px;height:6px;background:linear-gradient(135deg,#fff 40%,#e1e3f3);border:1px solid #8e97ae;border-radius:1.5px"></i>
<i class="abs" style="left:759px;top:496px;width:6px;height:6px;background:linear-gradient(135deg,#fff 40%,#e1e3f3);border:1px solid #8e97ae;border-radius:1.5px"></i>
<span class="abs" style="left:851px;top:209px;font-size:13px;font-weight:bold;white-space:nowrap;color:#111">Painel selecionado</span>
<svg class="abs" style="left:770px;top:220px" width="80" height="45" viewBox="0 0 80 45"><path d="M65.300 9.200 L11 27.400" stroke="#000" stroke-width="4.300" stroke-linecap="round" fill="none"/><path d="M16.500 11 L10.800 27.500 L24.700 36.600" stroke="#000" stroke-width="4.300" stroke-linecap="round" stroke-linejoin="round" fill="none"/></svg>
<svg class="abs" style="left:1020px;top:500px" width="90" height="45" viewBox="0 0 90 45"><path d="M10.800 8.300 L78 29.100" stroke="#000" stroke-width="4.300" stroke-linecap="round" fill="none"/><path d="M71.300 15 L78.300 29.200 L65 35.800" stroke="#000" stroke-width="4.300" stroke-linecap="round" stroke-linejoin="round" fill="none"/></svg>
<div class="abs" style="left:521px;top:116px;width:20px;height:19px;border:1px solid #8c919b;border-radius:4px;background:linear-gradient(#b4b8c1,#c1c5cd)"></div>
<svg class="abs" style="left:522px;top:117px" width="18" height="17" viewBox="0 0 18 17"><rect x="1.500" y="1.500" width="9" height="10.500" fill="#f6dfc4" stroke="#e08a1f" stroke-width="1.200" stroke-dasharray="2 1.500"/><path d="M8.500 1.500 V13.500 L11 11 L13 15.500 L15 14.600 L13 10.300 L16.500 10Z" fill="#fff" stroke="#6a6f7a" stroke-width="1" stroke-linejoin="round"/></svg>
<svg class="abs" style="left:546px;top:117px" width="18" height="17" viewBox="0 0 18 17"><rect x="1.500" y="1.500" width="9" height="6" fill="#f4f5f8" stroke="#6b7382"/><path d="M1.500 2.500 H10.500" stroke="#6b7382" stroke-width="1.500"/><rect x="7.500" y="9.500" width="9" height="6" fill="#f4f5f8" stroke="#6b7382"/><path d="M7.500 10.500 H16.500" stroke="#6b7382" stroke-width="1.500"/><path d="M12 3.500 H14.500 V7 M14.500 8 L12.800 5.800 H16.200Z" fill="#333" stroke="#333" stroke-width="1"/><path d="M6 13.500 H3.500 V10 M3.500 9 L1.800 11.200 H5.200Z" fill="#333" stroke="#333" stroke-width="1"/></svg>
<svg class="abs" style="left:575px;top:116px" width="20" height="18" viewBox="0 0 20 18"><rect x="2.500" y="5.500" width="14" height="11" fill="#f4f5f8" stroke="#6b7382"/><path d="M3 7 H8" stroke="#8fa5cf" stroke-width="2"/><path d="M5 13.500 H12" stroke="#c9ccd3" stroke-width="1.200"/><ellipse cx="12.500" cy="5.500" rx="5.500" ry="4.300" fill="#e9eebc" stroke="#6c7436" stroke-width=".9"/><circle cx="12.500" cy="5.200" r="3.200" fill="#6b9422" stroke="#3f5a10" stroke-width=".8"/><circle cx="12.500" cy="5.200" r="1.600" fill="#0a0a0a"/></svg>
<svg class="abs" style="left:620px;top:118px" width="16" height="16" viewBox="0 0 16 16"><path d="M.5 .5 V15" stroke="#a1a5ae"/><rect x="0" y="1" width="7" height="5" fill="#a1a5ae"/><rect x="0" y="9" width="15" height="5" fill="#a1a5ae"/><path d="M14.500 .5 V15" stroke="#a1a5ae" stroke-dasharray="1.500 1.500"/></svg>
<svg class="abs" style="left:644px;top:118px" width="16" height="16" viewBox="0 0 16 16"><path d="M.5 .5 V15" stroke="#a1a5ae" stroke-dasharray="1.500 1.500"/><rect x="8" y="1" width="7" height="5" fill="#a1a5ae"/><rect x="0" y="9" width="15" height="5" fill="#a1a5ae"/><path d="M14.500 .5 V15" stroke="#a1a5ae"/></svg>
<svg class="abs" style="left:668px;top:118px" width="16" height="16" viewBox="0 0 16 16"><path d="M7.500 0 V15" stroke="#a1a5ae"/><rect x="3" y="1" width="9" height="5" fill="#a1a5ae"/><rect x="0" y="9" width="15" height="5" fill="#a1a5ae"/></svg>
<svg class="abs" style="left:692px;top:118px" width="16" height="16" viewBox="0 0 16 16"><path d="M0 .5 H15" stroke="#a1a5ae"/><rect x="1" y="1" width="5" height="13" fill="#a1a5ae"/><rect x="9" y="1" width="5" height="6" fill="#a1a5ae"/><path d="M0 14.500 H15" stroke="#a1a5ae" stroke-dasharray="1.500 1.500"/></svg>
<svg class="abs" style="left:716px;top:118px" width="16" height="16" viewBox="0 0 16 16"><path d="M6 .5 H15" stroke="#a1a5ae" stroke-dasharray="1.500 1.500"/><rect x="0" y="0" width="6" height="14" fill="#a1a5ae"/><rect x="9" y="7" width="5" height="7" fill="#a1a5ae"/><path d="M0 14.500 H15" stroke="#a1a5ae"/></svg>
<svg class="abs" style="left:740px;top:118px" width="16" height="16" viewBox="0 0 16 16"><path d="M0 7.500 H15" stroke="#a1a5ae"/><rect x="1" y="0" width="5" height="14" fill="#a1a5ae"/><rect x="9" y="3" width="5" height="8" fill="#a1a5ae"/></svg>
<div class="abs" style="left:779px;top:116px;width:20px;height:19px;border:1px solid #8c919b;border-radius:4px;background:linear-gradient(#b4b8c1,#c1c5cd)"></div>
<svg class="abs" style="left:780px;top:117px" width="18" height="17" viewBox="0 0 18 17"><path d="M1.500 8.500 L6 4 V6.500 H12 V4 L16.500 8.500 L12 13 V10.500 H6 V13Z" fill="#eef0f3" stroke="#4a4f59" stroke-width="1" stroke-linejoin="round"/></svg>
<div class="abs" style="left:805px;top:116px;width:20px;height:19px;border:1px solid #8c919b;border-radius:4px;background:linear-gradient(#b4b8c1,#c1c5cd)"></div>
<svg class="abs" style="left:806px;top:117px" width="18" height="17" viewBox="0 0 18 17"><path d="M9 1 L13 5.500 H10.500 V11.500 H13 L9 16 L5 11.500 H7.500 V5.500 H5Z" fill="#eef0f3" stroke="#4a4f59" stroke-width="1" stroke-linejoin="round"/></svg>
<!-- PALETTE -->
<div class="tab sel" style="left:1108px;top:84px;width:328px;height:24px"><b style="letter-spacing:.1px;top:7px">Palette</b><svg class="abs" style="left:298px;top:8px" width="28" height="10" viewBox="0 0 28 10"><rect x="1" y="1.300" width="2.600" height="6.700" fill="none" stroke="#2b3038" stroke-width="1"/><path d="M5.500 1 V8 L10.500 4.500Z" fill="#2b3038"/><path d="M18.500 1 L25.500 8 M25.500 1 L18.500 8" stroke="#2b3038" stroke-width="1.600"/></svg></div>
<div class="abs" style="left:1108px;top:108px;width:328px;height:243px;background:#fff;border:1px solid #aeb3bc;border-top:none"></div>
<div class="abs ph" style="left:1109px;top:108px"><i class="arr-d" style="left:4px;top:6px;background:#666"></i><b style="left:25px;letter-spacing:-.1px">JCalendar</b></div>
<div class="abs ph" style="left:1109px;top:230px;height:16px"><i class="arr-d" style="left:4px;top:5px;background:#666"></i><b style="left:26px;letter-spacing:-.15px;top:3px">Swing Containers</b></div>
<svg class="abs" style="left:1116px;top:133px" width="10" height="12" viewBox="0 0 12 14"><path d="M1 1 H7.500 L11 4.500 V13 H1Z" fill="#fff" stroke="#111" stroke-width="1.300"/><path d="M7.500 1 V4.500 H11" fill="none" stroke="#111" stroke-width="1"/><path d="M4 6 Q6.500 4.500 6.500 7 Q6.500 8 5.500 9" fill="none" stroke="#e98080" stroke-width="1"/></svg><span class="abs pt" style="left:1134px;top:133px">JCalendar</span>
<svg class="abs" style="left:1271px;top:133px" width="10" height="12" viewBox="0 0 12 14"><path d="M1 1 H7.500 L11 4.500 V13 H1Z" fill="#fff" stroke="#111" stroke-width="1.300"/><path d="M7.500 1 V4.500 H11" fill="none" stroke="#111" stroke-width="1"/><path d="M4 6 Q6.500 4.500 6.500 7 Q6.500 8 5.500 9" fill="none" stroke="#e98080" stroke-width="1"/></svg><span class="abs pt" style="left:1289px;top:133px">JDayChooser</span>
<svg class="abs" style="left:1116px;top:159px" width="10" height="12" viewBox="0 0 12 14"><path d="M1 1 H7.500 L11 4.500 V13 H1Z" fill="#fff" stroke="#111" stroke-width="1.300"/><path d="M7.500 1 V4.500 H11" fill="none" stroke="#111" stroke-width="1"/><path d="M4 6 Q6.500 4.500 6.500 7 Q6.500 8 5.500 9" fill="none" stroke="#e98080" stroke-width="1"/></svg><span class="abs pt" style="left:1134px;top:159px">JLocaleChooser</span>
<svg class="abs" style="left:1271px;top:159px" width="10" height="12" viewBox="0 0 12 14"><path d="M1 1 H7.500 L11 4.500 V13 H1Z" fill="#fff" stroke="#111" stroke-width="1.300"/><path d="M7.500 1 V4.500 H11" fill="none" stroke="#111" stroke-width="1"/><path d="M4 6 Q6.500 4.500 6.500 7 Q6.500 8 5.500 9" fill="none" stroke="#e98080" stroke-width="1"/></svg><span class="abs pt" style="left:1289px;top:159px">JDateChooser</span>
<svg class="abs" style="left:1116px;top:185px" width="10" height="12" viewBox="0 0 12 14"><path d="M1 1 H7.500 L11 4.500 V13 H1Z" fill="#fff" stroke="#111" stroke-width="1.300"/><path d="M7.500 1 V4.500 H11" fill="none" stroke="#111" stroke-width="1"/><path d="M4 6 Q6.500 4.500 6.500 7 Q6.500 8 5.500 9" fill="none" stroke="#e98080" stroke-width="1"/></svg><span class="abs pt" style="left:1134px;top:185px">JMonthChooser</span>
<svg class="abs" style="left:1271px;top:185px" width="10" height="12" viewBox="0 0 12 14"><path d="M1 1 H7.500 L11 4.500 V13 H1Z" fill="#fff" stroke="#111" stroke-width="1.300"/><path d="M7.500 1 V4.500 H11" fill="none" stroke="#111" stroke-width="1"/><path d="M4 6 Q6.500 4.500 6.500 7 Q6.500 8 5.500 9" fill="none" stroke="#e98080" stroke-width="1"/></svg><span class="abs pt" style="left:1289px;top:185px">JSpinField</span>
<svg class="abs" style="left:1116px;top:211px" width="10" height="12" viewBox="0 0 12 14"><path d="M1 1 H7.500 L11 4.500 V13 H1Z" fill="#fff" stroke="#111" stroke-width="1.300"/><path d="M7.500 1 V4.500 H11" fill="none" stroke="#111" stroke-width="1"/><path d="M4 6 Q6.500 4.500 6.500 7 Q6.500 8 5.500 9" fill="none" stroke="#e98080" stroke-width="1"/></svg><span class="abs pt" style="left:1134px;top:211px">JYearChooser</span>
<svg class="abs" style="left:1114px;top:251px" width="16" height="16" viewBox="0 0 16 16"><rect x=".5" y=".5" width="15" height="13" rx="1" fill="#e9ebee" stroke="#8a8f99"/></svg><span class="abs pt" style="left:1134px;top:254px;letter-spacing:.1px">Panel</span>
<svg class="abs" style="left:1269px;top:251px" width="16" height="16" viewBox="0 0 16 16"><rect x=".5" y="3.500" width="15" height="11" fill="#f4f5f7" stroke="#7d838e"/><path d="M.5 3.500 V.5 H5.500 V3.500 M5.500 1.500 H10.500 V3.500" fill="#e3e5e9" stroke="#7d838e"/></svg><span class="abs pt" style="left:1289px;top:254px;letter-spacing:.3px">Tabbed Pane</span>
<svg class="abs" style="left:1114px;top:277px" width="16" height="16" viewBox="0 0 16 16"><rect x="0" y="1" width="16" height="13" fill="#dfe6f3"/><path d="M0 1.500 H5.500 V13.500 H0 M16 1.500 H10.500 V13.500 H16" fill="none" stroke="#6d7686"/><path d="M8 1 V14" stroke="#9fb2d6" stroke-width="2"/><path d="M7 5 h2 M7 9 h2" stroke="#55607a"/></svg><span class="abs pt" style="left:1134px;top:280px;letter-spacing:.1px">Split Pane</span>
<svg class="abs" style="left:1269px;top:277px" width="16" height="16" viewBox="0 0 16 16"><rect x=".5" y=".5" width="15" height="14" fill="#eef0f3" stroke="#555b66"/><path d="M12 .5 V15 M.5 11.500 H15.500" stroke="#555b66"/><rect x="12.500" y="4" width="3" height="4" fill="#8c95a5"/><rect x="3" y="12" width="4" height="3" fill="#8c95a5"/></svg><span class="abs pt" style="left:1289px;top:280px;letter-spacing:.1px">Scroll Pane</span>
<svg class="abs" style="left:1114px;top:303px" width="16" height="16" viewBox="0 0 16 16"><rect x=".5" y="3.500" width="15" height="9" fill="#eceef1" stroke="#858b96"/><path d="M3 6 v1 M3 9 v1" stroke="#666"/><rect x="5.500" y="5.500" width="6" height="5" fill="#dfe2e7" stroke="#858b96"/></svg><span class="abs pt" style="left:1134px;top:306px;letter-spacing:.1px">Tool Bar</span>
<svg class="abs" style="left:1269px;top:303px" width="16" height="16" viewBox="0 0 16 16"><rect x="3.500" y=".5" width="9" height="7" fill="#fff" stroke="#555"/><path d="M3.500 2 H12.500" stroke="#555" stroke-width="1.500"/><rect x="7.500" y="5.500" width="8" height="7" fill="#fff" stroke="#555"/><path d="M7.500 7 H15.500" stroke="#555" stroke-width="1.500"/><path d="M4.500 8 V13.500" stroke="#555"/><ellipse cx="3.500" cy="14" rx="2.500" ry="1.300" fill="#fff" stroke="#555" stroke-width=".9"/></svg><span class="abs pt" style="left:1289px;top:306px;letter-spacing:.2px">Desktop Pane</span>
<svg class="abs" style="left:1114px;top:329px" width="16" height="16" viewBox="0 0 16 16"><rect x=".5" y="1.500" width="15" height="13" fill="#f1f2f4" stroke="#555b66"/><path d="M1 2.500 H15" stroke="#6c7280" stroke-width="2"/><path d="M2 2.500 h1 M4 2.500 h1 M6 2.500 h1" stroke="#d9dce2"/></svg><span class="abs pt" style="left:1134px;top:332px;letter-spacing:.1px">Internal Frame</span>
<svg class="abs" style="left:1269px;top:329px" width="16" height="16" viewBox="0 0 16 16"><rect x=".5" y=".5" width="15" height="14" fill="#f4f4f8" stroke="#555b66"/><rect x="3" y="3" width="7" height="7" fill="#5d4fb3"/><rect x="6" y="6" width="7" height="7" fill="#8f86d1" opacity=".85"/></svg><span class="abs pt" style="left:1289px;top:332px;letter-spacing:.1px">Layered Pane</span>
<div class="abs" style="left:1420px;top:108px;width:16px;height:243px;background:linear-gradient(90deg,#dfe1e6,#eceef1)"></div><div class="abs" style="left:1420px;top:125px;width:15px;height:211px;border-radius:0 0 8px 0;background:linear-gradient(90deg,#979ba4,#b4b8c0 45%,#c9ccd3);box-shadow:inset 0 -2px 2px -1px #6f747e"></div><i class="abs" style="left:1424px;top:113px;width:7px;height:6.500px;background:#45484e;clip-path:polygon(50% 0,100% 100%,0 100%)"></i><i class="abs" style="left:1424px;top:340px;width:7px;height:6.500px;background:#45484e;clip-path:polygon(0 0,100% 0,50% 100%)"></i><div class="abs" style="left:1420px;top:125px;width:15px;height:62px;border:1px solid #2f4a66;border-left:none;border-radius:0 14px 14px 0 / 0 9px 9px 0;background:linear-gradient(90deg,#bfd2e5,#cfdeec 50%,#deeaf4)"></div>
<!-- PROPERTIES -->
<div class="tab sel" style="left:1108px;top:360px;width:328px;height:24px"><b style="letter-spacing:.1px;top:6px">jPanel1 [JPanel] - Properties</b><svg class="abs" style="left:298px;top:8px" width="28" height="10" viewBox="0 0 28 10"><rect x="1" y="1.300" width="2.600" height="6.700" fill="none" stroke="#2b3038" stroke-width="1"/><path d="M5.500 1 V8 L10.500 4.500Z" fill="#2b3038"/><path d="M18.500 1 L25.500 8 M25.500 1 L18.500 8" stroke="#2b3038" stroke-width="1.600"/></svg></div>
<div class="abs" style="left:1108px;top:384px;width:328px;height:245px;background:#d6d9df;border:1px solid #aeb3bc;border-top:none"></div>
<div class="abs" style="left:1108px;top:384px;width:328px;height:28px;border-left:1px solid #2a3442;border-bottom:1px solid #2a3442;border-top:1px solid #2a3442"></div>
<div class="abs" style="left:1338px;top:387px;width:70px;height:19px;border:1px solid #8c919b;border-radius:5px;background:linear-gradient(#b4b8c1,#c1c5cd);box-shadow:0 1px 0 #eceef1"></div>
<span class="abs pt" style="left:1120px;top:391px;letter-spacing:.15px">Properties</span>
<span class="abs pt" style="left:1202px;top:391px;letter-spacing:.15px">Binding</span>
<span class="abs pt" style="left:1280px;top:391px;letter-spacing:.15px">Events</span>
<span class="abs pt" style="left:1358px;top:391px;letter-spacing:.15px">Code</span>
<div class="abs" style="left:1109px;top:431px;width:311px;height:125px;background:#fff"></div>
<i class="arr-d" style="left:1110px;top:418px;background:#555"></i><span class="abs" style="left:1130px;top:417px;font-size:11px;letter-spacing:-.2px;white-space:nowrap">Code Generation</span>
<div class="abs" style="left:1265px;top:431px;width:155px;height:17px;background:#d8dbe1"></div>
<div class="abs" style="left:1109px;top:448px;width:311px;height:1px;background:#dcdde0"></div>
<span class="abs" style="left:1111px;top:435px;font-size:11px;white-space:nowrap;">Bean Class</span>
<span class="abs" style="left:1268px;top:434px;font-size:12px;letter-spacing:.12px;white-space:nowrap;color:#9b9ea6">class javax.swing.JPanel</span>
<div class="abs" style="left:1265px;top:449px;width:155px;height:17px;background:#f2f2f3"></div>
<div class="abs" style="left:1109px;top:466px;width:311px;height:1px;background:#dcdde0"></div>
<span class="abs" style="left:1111px;top:453px;font-size:11px;white-space:nowrap;">Variable Name</span>
<span class="abs" style="left:1268px;top:452px;font-size:12px;letter-spacing:.12px;white-space:nowrap;color:#000">jPanel1</span>
<i class="abs" style="left:1404px;top:449px;width:16px;height:17px;background:#fff"></i>
<i class="abs" style="left:1406px;top:450px;width:11px;height:15px;border:1px solid #30343b;border-radius:4px;background:linear-gradient(#fdfdfd,#e4e6ea)"></i><i class="abs" style="left:1408px;top:461px;width:7px;height:1px;background:repeating-linear-gradient(90deg,#444 0 1px,transparent 1px 3px)"></i>
<div class="abs" style="left:1265px;top:467px;width:155px;height:17px;background:#d6d9df"></div>
<div class="abs" style="left:1109px;top:484px;width:311px;height:1px;background:#dcdde0"></div>
<span class="abs" style="left:1111px;top:471px;font-size:11px;white-space:nowrap;">Variable Modifiers</span>
<span class="abs" style="left:1268px;top:470px;font-size:12px;letter-spacing:.12px;white-space:nowrap;color:#000">private</span>
<i class="abs" style="left:1406px;top:468px;width:11px;height:15px;border:1px solid #30343b;border-radius:4px;background:linear-gradient(#fdfdfd,#e4e6ea)"></i><i class="abs" style="left:1408px;top:479px;width:7px;height:1px;background:repeating-linear-gradient(90deg,#444 0 1px,transparent 1px 3px)"></i>
<div class="abs" style="left:1265px;top:485px;width:155px;height:17px;background:#f2f2f3"></div>
<div class="abs" style="left:1109px;top:502px;width:311px;height:1px;background:#dcdde0"></div>
<span class="abs" style="left:1111px;top:489px;font-size:11px;white-space:nowrap;">Type Parameters</span>
<i class="abs" style="left:1404px;top:485px;width:16px;height:17px;background:#fff"></i>
<i class="abs" style="left:1406px;top:486px;width:11px;height:15px;border:1px solid #30343b;border-radius:4px;background:linear-gradient(#fdfdfd,#e4e6ea)"></i><i class="abs" style="left:1408px;top:497px;width:7px;height:1px;background:repeating-linear-gradient(90deg,#444 0 1px,transparent 1px 3px)"></i>
<div class="abs" style="left:1265px;top:503px;width:155px;height:17px;background:#fff"></div>
<div class="abs" style="left:1109px;top:520px;width:311px;height:1px;background:#dcdde0"></div>
<span class="abs" style="left:1111px;top:507px;font-size:11px;white-space:nowrap;">Use Local Variable</span>
<i class="abs" style="left:1267px;top:505px;width:14px;height:14px;border:1px solid #7a808c;border-radius:3px;background:linear-gradient(#f4f5f7,#d5d8de)"></i>
<div class="abs" style="left:1265px;top:521px;width:155px;height:17px;background:#fff"></div>
<div class="abs" style="left:1109px;top:538px;width:311px;height:1px;background:#dcdde0"></div>
<span class="abs" style="left:1111px;top:525px;font-size:11px;white-space:nowrap;font-weight:bold;letter-spacing:.35px">Custom Creation Code</span>
<span class="abs" style="left:1268px;top:524px;font-size:12px;letter-spacing:.12px;white-space:nowrap;color:#000">new ImagePanel( "/pai...</span>
<i class="abs" style="left:1404px;top:521px;width:16px;height:17px;background:#fff"></i>
<i class="abs" style="left:1406px;top:522px;width:11px;height:15px;border:1px solid #30343b;border-radius:4px;background:linear-gradient(#fdfdfd,#e4e6ea)"></i><i class="abs" style="left:1408px;top:533px;width:7px;height:1px;background:repeating-linear-gradient(90deg,#444 0 1px,transparent 1px 3px)"></i>
<div class="abs" style="left:1265px;top:539px;width:155px;height:17px;background:#d6d9df"></div>
<div class="abs" style="left:1109px;top:556px;width:311px;height:1px;background:#dcdde0"></div>
<span class="abs" style="left:1111px;top:543px;font-size:11px;white-space:nowrap;">Pre-Creation Code</span>
<i class="abs" style="left:1406px;top:540px;width:11px;height:15px;border:1px solid #30343b;border-radius:4px;background:linear-gradient(#fdfdfd,#e4e6ea)"></i><i class="abs" style="left:1408px;top:551px;width:7px;height:1px;background:repeating-linear-gradient(90deg,#444 0 1px,transparent 1px 3px)"></i>
<div class="abs" style="left:1264px;top:431px;width:1px;height:125px;background:#dcdde0"></div>
<div class="abs" style="left:1420px;top:413px;width:16px;height:141px;background:linear-gradient(90deg,#dfe1e6,#eceef1)"></div><div class="abs" style="left:1420px;top:430px;width:15px;height:109px;border-radius:0 0 8px 0;background:linear-gradient(90deg,#979ba4,#b4b8c0 45%,#c9ccd3);box-shadow:inset 0 -2px 2px -1px #6f747e"></div><i class="abs" style="left:1424px;top:418px;width:7px;height:6.500px;background:#45484e;clip-path:polygon(50% 0,100% 100%,0 100%)"></i><i class="abs" style="left:1424px;top:543px;width:7px;height:6.500px;background:#45484e;clip-path:polygon(0 0,100% 0,50% 100%)"></i><div class="abs" style="left:1420px;top:430px;width:15px;height:37px;border:1px solid #2f4a66;border-left:none;border-radius:0 14px 14px 0 / 0 9px 9px 0;background:linear-gradient(90deg,#bfd2e5,#cfdeec 50%,#deeaf4)"></div>
<div class="abs" style="left:1109px;top:554px;width:327px;height:10px;background:#d6d9df;border-top:1px solid #a9adb6;border-bottom:1px solid #b9bdc5"></div>
<div class="abs" style="left:1264px;top:557px;width:17px;height:3px;border:1px solid #f4f5f7;border-top-color:#a8adb6;border-radius:2px"></div>
<div class="abs" style="left:1110px;top:588px;width:324px;height:40px;background:#fff;border:1px solid #c3c6cd;border-top:none"></div>
<span class="abs" style="left:1111px;top:573px;font-size:12px;font-weight:bold;white-space:nowrap">jPanel1 [JPanel]</span>
<svg class="abs" style="left:1413px;top:569px" width="17" height="17" viewBox="0 0 17 17"><circle cx="8.500" cy="8.500" r="7.500" fill="#3f6fd1" stroke="#23479a"/><circle cx="8.500" cy="6" r="5" fill="#6d97e8" opacity=".6"/><text x="8.500" y="12.500" text-anchor="middle" font-family="Liberation Sans,sans-serif" font-weight="bold" font-size="11" fill="#fff">?</text></svg>
<!-- OUTPUT TABS -->
<div class="tab" style="left:342px;top:633px;width:182px;height:24px"><b style="letter-spacing:.18px;top:7px">Search Results</b></div>
<div class="tab sel" style="left:524px;top:633px;width:183px;height:24px"><b style="letter-spacing:.18px;top:7px">Output - PainelImagem...</b><svg class="abs" style="left:153px;top:8px" width="24" height="10" viewBox="0 0 24 10"><path d="M1.500 1 H8.500 M2 3 H8 L5 6.500Z M5 6 V9.500" stroke="#2b3038" stroke-width="1.200" fill="#2b3038"/><path d="M16 1 L23 8 M23 1 L16 8" stroke="#2b3038" stroke-width="1.600"/></svg></div>
<div class="tab" style="left:707px;top:633px;width:183px;height:24px"><b style="letter-spacing:.18px;top:7px">Tasks</b></div>
<div class="tab" style="left:890px;top:633px;width:181px;height:24px"><b style="letter-spacing:.18px;top:7px">Usages</b></div>
<div class="tab" style="left:1071px;top:633px;width:182px;height:24px"><b style="letter-spacing:.18px;top:7px">iReport output</b></div>
<div class="tab" style="left:1253px;top:633px;width:183px;height:24px"><b style="letter-spacing:.18px;top:7px">Report Problems Window</b></div>
<div class="abs" style="left:342px;top:656px;width:1094px;height:187px;background:#fff;border:1px solid #9aa0ab;border-top:1px solid #1d2836"></div>
<div class="abs" style="left:343px;top:657px;width:44px;height:185px;background:#d6d9df"></div>
<svg class="abs" style="left:346px;top:660px" width="17" height="17" viewBox="0 0 17 17"><path d="M1.500 2 L8 8.500 L1.500 15Z M8.500 2 L15 8.500 L8.500 15Z" fill="#b9f28a" stroke="#2f9a12" stroke-width="1.400" stroke-linejoin="round"/></svg>
<svg class="abs" style="left:346px;top:684px" width="17" height="17" viewBox="0 0 17 17"><path d="M1.500 2 L8 8.500 L1.500 15Z M8.500 2 L15 8.500 L8.500 15Z" fill="#f4f39a" stroke="#a9a514" stroke-width="1.400" stroke-linejoin="round"/></svg>
<svg class="abs" style="left:347px;top:709px" width="16" height="16" viewBox="0 0 16 16"><rect x="1.500" y="1.500" width="13" height="13" fill="#d9babd" stroke="#cba9ac"/><rect x="5" y="5" width="6" height="6" fill="#e3c3c3" stroke="#d39f9f"/></svg>
<svg class="abs" style="left:346px;top:732px" width="18" height="18" viewBox="0 0 18 18"><circle cx="4" cy="4" r="2.700" fill="#f3c64b" stroke="#7a5a12" stroke-width="1"/><circle cx="4" cy="4" r=".9" fill="#7a5a12"/><path d="M3 15 L12 5 Q11 2 14.500 1.500 L13 4 L15 5.500 L17 3.500 Q17.500 7 14 7 L5.500 16.500Z" fill="#e9ecf0" stroke="#2e3440" stroke-width="1" stroke-linejoin="round"/><rect x="9.500" y="11.500" width="7" height="4.500" rx="1" fill="#e9ecf0" stroke="#2e3440"/><path d="M11 11.500 V9.500 H15 V11.500" fill="none" stroke="#2e3440"/></svg>
<span class="abs mono" style="left:393px;top:664px;color:#808080">run:</span>
<span class="abs mono" style="left:393px;top:680px;color:#1f901f">BUILD SUCCESSFUL (total time: 14 seconds)</span>
<div class="abs" style="left:1420px;top:658px;width:16px;height:184px;background:linear-gradient(90deg,#dfe1e6,#eceef1)"></div>
<div class="abs" style="left:1420px;top:674px;width:15px;height:152px;border-radius:0 8px 8px 0;background:linear-gradient(90deg,#979ba4,#b4b8c0 45%,#c9ccd3);box-shadow:inset 0 4px 3px -2px #4f5359,inset 0 -2px 2px -1px #6f747e"></div>
<i class="abs" style="left:1424px;top:663px;width:7px;height:6.500px;background:#45484e;clip-path:polygon(50% 0,100% 100%,0 100%)"></i>
<i class="abs" style="left:1424px;top:831px;width:7px;height:6.500px;background:#45484e;clip-path:polygon(0 0,100% 0,50% 100%)"></i>
<!-- STATUS BAR -->
<div class="abs" style="left:0;top:847px;width:1440px;height:1px;background:#b4b8c0"></div>
<div class="abs" style="left:0;top:848px;width:1440px;height:1px;background:#e6e8ec"></div>
<i class="abs" style="left:1343px;top:851px;width:1px;height:15px;background:#aab0ba"></i><i class="abs" style="left:1411px;top:851px;width:1px;height:15px;background:#aab0ba"></i>
<span class="abs" style="left:1362px;top:854px;font-size:12px;white-space:nowrap">28 | 9</span>
<span class="abs" style="left:1415px;top:854px;font-size:12px;letter-spacing:-.2px;white-space:nowrap">INS</span>
</div>
<!-- WINDOWS TASKBAR -->
<div id="tb" style="position:absolute;left:0;top:0;width:1440px;height:904px">
<div class="abs" style="left:0;top:870px;width:1440px;height:30px;background:linear-gradient(#8799b2,#8093ac 30%,#8092ab);border-top:1px solid #3c4658;box-shadow:inset 0 1px 0 #a9b7cc"></div>
<div class="abs" style="left:1426px;top:871px;width:14px;height:29px;background:linear-gradient(90deg,#3d4656,#8190a8 40%,#5c6980);border-left:1px solid #2e3646"></div>
<svg class="abs" style="left:7px;top:862px" width="40" height="40" viewBox="0 0 40 40"><defs><radialGradient id="og" cx="50%" cy="35%" r="65%"><stop offset="0" stop-color="#8fd0f5"/><stop offset=".55" stop-color="#2c78c4"/><stop offset="1" stop-color="#123a7a"/></radialGradient></defs><circle cx="20" cy="21" r="17.500" fill="url(#og)" stroke="#27466e" stroke-width="1.500"/><path d="M5 17 Q20 5 35 17 Q28 3.500 20 3.500 Q12 3.500 5 17Z" fill="#d5ecfb" opacity=".55"/><path d="M12.500 14.500 Q15.500 12.500 19 14 L18 20 Q15 18.800 11.500 20.500Z" fill="#f0642d"/><path d="M20.500 14.300 Q23.500 15.500 27.500 13.500 L26.500 19.500 Q23 21.500 19.500 20.200Z" fill="#8fc93a"/><path d="M11.200 22 Q14.500 20.300 17.800 21.500 L16.800 27.500 Q13.500 26.200 10.200 28Z" fill="#3fa0e6"/><path d="M19.300 21.800 Q22.500 23 26.300 21 L25.300 27 Q21.500 29 18.300 27.800Z" fill="#fbc31d"/><ellipse cx="20" cy="35" rx="10" ry="3" fill="#5fe0f5" opacity=".55"/></svg>
<div class="abs" style="left:60px;top:870px;width:159px;height:29px;border:1px solid #2f3b4f;border-radius:3px;background:linear-gradient(#a4b3c9,#93a5be 45%,#8699b4 50%,#8c9eb8);box-shadow:inset 0 0 0 1px rgba(255,255,255,.35)"><svg class="abs" style="left:9px;top:6px" width="17" height="17" viewBox="0 0 17 17"><circle cx="11" cy="5" r="3" fill="#4fb6e8" stroke="#1d6fa0" stroke-width=".8"/><path d="M6 15 Q6 9 11 9 Q16 9 16 15Z" fill="#4fb6e8" stroke="#1d6fa0" stroke-width=".8"/><circle cx="5.500" cy="6" r="2.800" fill="#7dd04a" stroke="#3b8a1a" stroke-width=".8"/><path d="M1 15.500 Q1 10 5.500 10 Q10 10 10 15.500Z" fill="#7dd04a" stroke="#3b8a1a" stroke-width=".8"/><path d="M1 14 Q8 11 16 14 V16 H1Z" fill="#f6b73c"/></svg><span class="abs" style="left:29px;top:8px;font-size:12px;letter-spacing:-0.22px;color:#fff;white-space:nowrap;text-shadow:0 0 2px rgba(40,50,70,.6)">Windows Live Messe...</span></div>
<svg class="abs" style="left:234px;top:875px" width="18" height="18" viewBox="0 0 18 18"><circle cx="7" cy="7" r="5.500" fill="#19a7ea"/><circle cx="11" cy="11" r="5.500" fill="#19a7ea"/><circle cx="9" cy="9" r="6.500" fill="#19a7ea"/><text x="9" y="13" text-anchor="middle" font-family="Liberation Sans,sans-serif" font-weight="bold" font-size="11" fill="#fff">S</text></svg>
<div class="abs" style="left:267px;top:870px;width:160px;height:29px;border:1px solid #2f3b4f;border-radius:3px;background:linear-gradient(#a4b3c9,#93a5be 45%,#8699b4 50%,#8c9eb8);box-shadow:inset 0 0 0 1px rgba(255,255,255,.35)"><svg class="abs" style="left:9px;top:6px" width="17" height="17" viewBox="0 0 17 17"><circle cx="8.500" cy="8.500" r="7.500" fill="#f08a24" stroke="#a94d0c" stroke-width=".8"/><circle cx="9" cy="7.500" r="4.200" fill="#3a5fb5"/><path d="M2 6 Q5 2 9 4 Q6 5 6.500 8 Q7 11 11 11 Q14 10.500 14.500 7 Q17 12 12 15 Q6 17 2.500 12 Q1 9 2 6Z" fill="#f7a733"/><path d="M3 4 Q4 6 6 6.500 L4.500 9Z" fill="#d6451a"/></svg><span class="abs" style="left:29px;top:8px;font-size:12px;letter-spacing:-0.38px;color:#fff;white-space:nowrap;text-shadow:0 0 2px rgba(40,50,70,.6)">Responder a [DÚVID...</span></div>
<svg class="abs" style="left:442px;top:876px" width="18" height="18" viewBox="0 0 18 18"><path d="M14 1.500 L2.500 8.500 L7.300 10.200 L3.500 16.500 L15.500 9.300 L10.500 7.800Z" fill="#f5a21b" stroke="#3a2c0c" stroke-width="1.400" stroke-linejoin="round"/></svg>
<svg class="abs" style="left:487px;top:876px" width="18" height="18" viewBox="0 0 18 18"><circle cx="9" cy="9" r="7.500" fill="#f3f3f3" stroke="#c2272d" stroke-width="2"/><path d="M4.500 11 Q9 3 13.500 11 L11 10 L9 12 L7 10Z" fill="#c2272d"/></svg>
<svg class="abs" style="left:534px;top:876px" width="18" height="18" viewBox="0 0 18 18"><rect x="2.500" y="2.500" width="13" height="14" fill="#cfe6f7" stroke="#5b86a8"/><path d="M4 1 v3 M6.500 1 v3 M9 1 v3 M11.500 1 v3 M14 1 v3" stroke="#3e4a5c" stroke-width="1"/><path d="M5 7.500 h8 M5 10 h8 M5 12.500 h8" stroke="#8fb5d3" stroke-width=".9"/></svg>
<div class="abs" style="left:567px;top:870px;width:160px;height:29px;border:1px solid #2f3b4f;border-radius:3px;background:linear-gradient(#b4c1d5,#a3b3ca 45%,#95a7c1 50%,#9eafc7);box-shadow:inset 0 0 0 1px rgba(255,255,255,.35)"><svg class="abs" style="left:10px;top:5px" width="17" height="18" viewBox="0 0 18 19"><path d="M9 1 L16 4.500 V14 L9 18 L2 14 V4.500 Z" fill="#b9cfe8" stroke="#26436f" stroke-width="1.400"/><path d="M9 8 L16 4.500 V14 L9 18Z" fill="#5f8cc4"/><path d="M2.600 5.200 L9 8.400 V17.200 L2.600 13.600Z" fill="#e6eff9"/><path d="M2 4.500 L9 8 L16 4.500 M9 8 V18" fill="none" stroke="#26436f" stroke-width="1.200"/></svg><span class="abs" style="left:29px;top:8px;font-size:12px;letter-spacing:-0.05px;color:#fff;white-space:nowrap;text-shadow:0 0 2px rgba(40,50,70,.6)">PainelImagem - Net...</span></div>
<i class="abs" style="left:1205.500px;top:883.500px;width:8.500px;height:5.500px;background:#fff;clip-path:polygon(50% 0,100% 100%,0 100%)"></i>
<svg class="abs" style="left:1226px;top:878px" width="16" height="16" viewBox="0 0 16 16"><circle cx="8" cy="8" r="7" fill="#e0666e" stroke="#b8303b" stroke-width="1.400"/><circle cx="8" cy="5.500" r="2" fill="#fbe9ea"/><circle cx="8" cy="10.800" r="2" fill="#f7d3d6"/><path d="M3 5 Q8 1 13 5" fill="none" stroke="#f1a9ae" stroke-width="1.200"/></svg>
<svg class="abs" style="left:1249px;top:877px" width="18" height="18" viewBox="0 0 18 18"><path d="M14 1.500 L2.500 8.500 L7.300 10.200 L3.500 16.500 L15.500 9.300 L10.500 7.800Z" fill="#f5a21b" stroke="#3a2c0c" stroke-width="1.400" stroke-linejoin="round"/></svg>
<svg class="abs" style="left:1274px;top:878px" width="17" height="17" viewBox="0 0 17 17"><rect width="17" height="17" fill="#d4212a"/><path d="M2.500 9.500 Q4 3.500 9 3.500 Q14 3.500 14.500 9 Q12 7 9.500 8.500 L12.500 14 M9.500 8.500 Q6 7 2.500 9.500" fill="none" stroke="#fff" stroke-width="1.600" stroke-linejoin="round"/></svg>
<svg class="abs" style="left:1297px;top:877px" width="18" height="18" viewBox="0 0 18 18"><rect x="5.500" y="4.500" width="11" height="9" fill="#8fa3bd" stroke="#fff" stroke-width="1.300"/><path d="M8 16.500 H14 M11 13.500 V16" stroke="#fff" stroke-width="1.400"/><path d="M2.500 1 V4 M5 1 V4 M1.500 4 H6 V7 H1.500Z M3.700 7 V15.500 H7" fill="none" stroke="#fff" stroke-width="1.300"/></svg>
<svg class="abs" style="left:1322px;top:877px" width="18" height="18" viewBox="0 0 18 18"><path d="M2 6.500 H5 L9.500 2 V16 L5 11.500 H2Z" fill="#f4f6f9" stroke="#dfe4ea" stroke-width=".8"/><path d="M12 6 Q14 9 12 12" fill="none" stroke="#fff" stroke-width="1.300"/></svg>
<span class="abs" style="left:1371px;top:880px;font-size:12px;letter-spacing:-.4px;color:#fff;white-space:nowrap">12:16</span>
<div class="abs" style="left:0;top:900px;width:1440px;height:4px;background:#fff"></div>
</div>
</body>
</html>
